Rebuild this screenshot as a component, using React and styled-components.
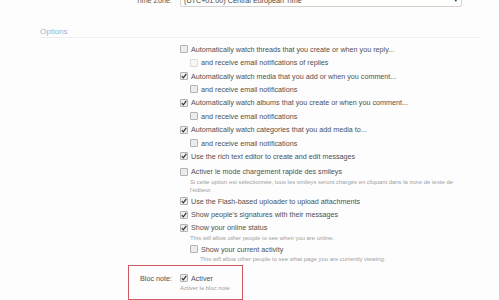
import styled, { createGlobalStyle } from 'styled-components'

const Global = createGlobalStyle`
    html, body {
        margin: 0;
        padding: 0;
        background: #fdfdfe;
    }
    body {
        font-family: 'Liberation Sans', Arial, sans-serif;
        color: #555;
        overflow: hidden;
    }
`

const Page = styled.div`
    width: 499px;
    height: 300px;
    overflow: hidden;
`

const FormRow = styled.div`
    display: flex;
    align-items: center;
    gap: 8px;
    margin-top: ${(props) => props.$offset || 0}px;
`

const Label = styled.div`
    width: 172px;
    text-align: right;
    font-size: 7.2px;
    color: #555;
    flex-shrink: 0;
`

const Select = styled.div`
    width: 282px;
    height: 14px;
    border: 1px solid #d2d2d2;
    border-radius: 2px;
    background: #fffffe;
    display: flex;
    align-items: center;
    justify-content: space-between;
    padding: 0 3px 0 3px;
    box-sizing: border-box;
    font-size: 7.2px;
    color: #444;

    &::after {
        content: '▾';
        font-size: 7px;
        color: #222;
    }
`

const SectionHeader = styled.h3`
    margin: 20px 19px 0 40px;
    padding: 0;
    line-height: 9.6px;
    font-size: 8px;
    font-weight: normal;
    color: #95b7d4;
    border-bottom: 1px solid #eeeef3;
`

const OptionList = styled.ul`
    list-style: none;
    margin: 5px 0 0 180px;
    padding: 0;
`

const Option = styled.li`
    padding-left: ${(props) => (props.$indent ? 10 : 0)}px;
    margin-top: ${(props) => props.$space || 0}px;
`

const Line = styled.div`
    display: flex;
    align-items: center;
    gap: 3px;
    height: 13.4px;
    font-size: 7.2px;
    color: #505050;
    white-space: nowrap;
`

const Box = styled.span`
    width: 6px;
    height: 6px;
    border: 1px solid ${(props) => (props.$disabled ? '#dcdcdc' : '#b3b3b3')};
    background: ${(props) => (props.$disabled ? '#f6f6f6' : '#ececec')};
    border-radius: 1px;
    flex-shrink: 0;
    display: flex;
    align-items: center;
    justify-content: center;
`

const Hint = styled.div`
    font-size: 5.9px;
    line-height: 8px;
    color: #9d9d9d;
    margin: -1px 0 1px;
    padding-left: ${(props) => (props.$inset ? 10 : 0)}px;
    width: 272px;
    white-space: ${(props) => (props.$inset ? 'normal' : 'nowrap')};
`

const NoteBox = styled.div`
    margin: 2px 0 0 128px;
    width: 115px;
    height: 35px;
    box-sizing: border-box;
    border: 1px solid #cf5a62;
    display: flex;
    padding: 5.5px 0 0 11px;
`

const NoteLabel = styled.div`
    width: 33px;
    text-align: right;
    font-size: 7.2px;
    color: #505050;
    line-height: 13.4px;
    white-space: nowrap;
`

const NoteBody = styled.div`
    margin-left: 8px;
`

function Check({ checked, disabled }) {
    return (
        <Box $disabled={disabled}>
            {checked && (
                <svg width="6" height="6" viewBox="0 0 6 6">
                    <path d="M0.8 3.2 L2.3 4.8 L5.3 0.8" fill="none" stroke="#333" strokeWidth="1.2" />
                </svg>
            )}
        </Box>
    )
}

const options = [
    { text: 'Automatically watch threads that you create or when you reply...' },
    { text: 'and receive email notifications of replies', indent: true, disabled: true },
    { text: 'Automatically watch media that you add or when you comment...', checked: true },
    { text: 'and receive email notifications', indent: true },
    { text: 'Automatically watch albums that you create or when you comment...', checked: true },
    { text: 'and receive email notifications', indent: true },
    { text: 'Automatically watch categories that you add media to...', checked: true },
    { text: 'and receive email notifications', indent: true },
    { text: 'Use the rich text editor to create and edit messages', checked: true },
    {
        text: 'Activer le mode chargement rapide des smileys',
        hint: "Si cette option est sélectionnée, tous les smileys seront chargés en cliquant dans la zone de texte de l'éditeur.",
        space: 2,
    },
    { text: 'Use the Flash-based uploader to upload attachments', checked: true },
    { text: "Show people's signatures with their messages", checked: true },
    {
        text: 'Show your online status',
        checked: true,
        hint: 'This will allow other people to see when you are online.',
    },
    {
        text: 'Show your current activity',
        indent: true,
        hint: 'This will allow other people to see what page you are currently viewing.',
    },
]

function App() {
    return (
        <Page>
            <Global />
            <FormRow $offset={-7}>
                <Label>Time Zone:</Label>
                <Select>(UTC+01:00) Central European Time</Select>
            </FormRow>
            <SectionHeader>Options</SectionHeader>
            <OptionList>
                {options.map((o, i) => (
                    <Option key={i} $indent={o.indent} $space={o.space}>
                        <Line>
                            <Check checked={o.checked} disabled={o.disabled} />
                            {o.text}
                        </Line>
                        {o.hint && <Hint $inset>{o.hint}</Hint>}
                    </Option>
                ))}
            </OptionList>
            <NoteBox>
                <NoteLabel>Bloc note:</NoteLabel>
                <NoteBody>
                    <Line>
                        <Check checked />
                        Activer
                    </Line>
                    <Hint>Activer le bloc note</Hint>
                </NoteBody>
            </NoteBox>
        </Page>
    )
}

export default App
